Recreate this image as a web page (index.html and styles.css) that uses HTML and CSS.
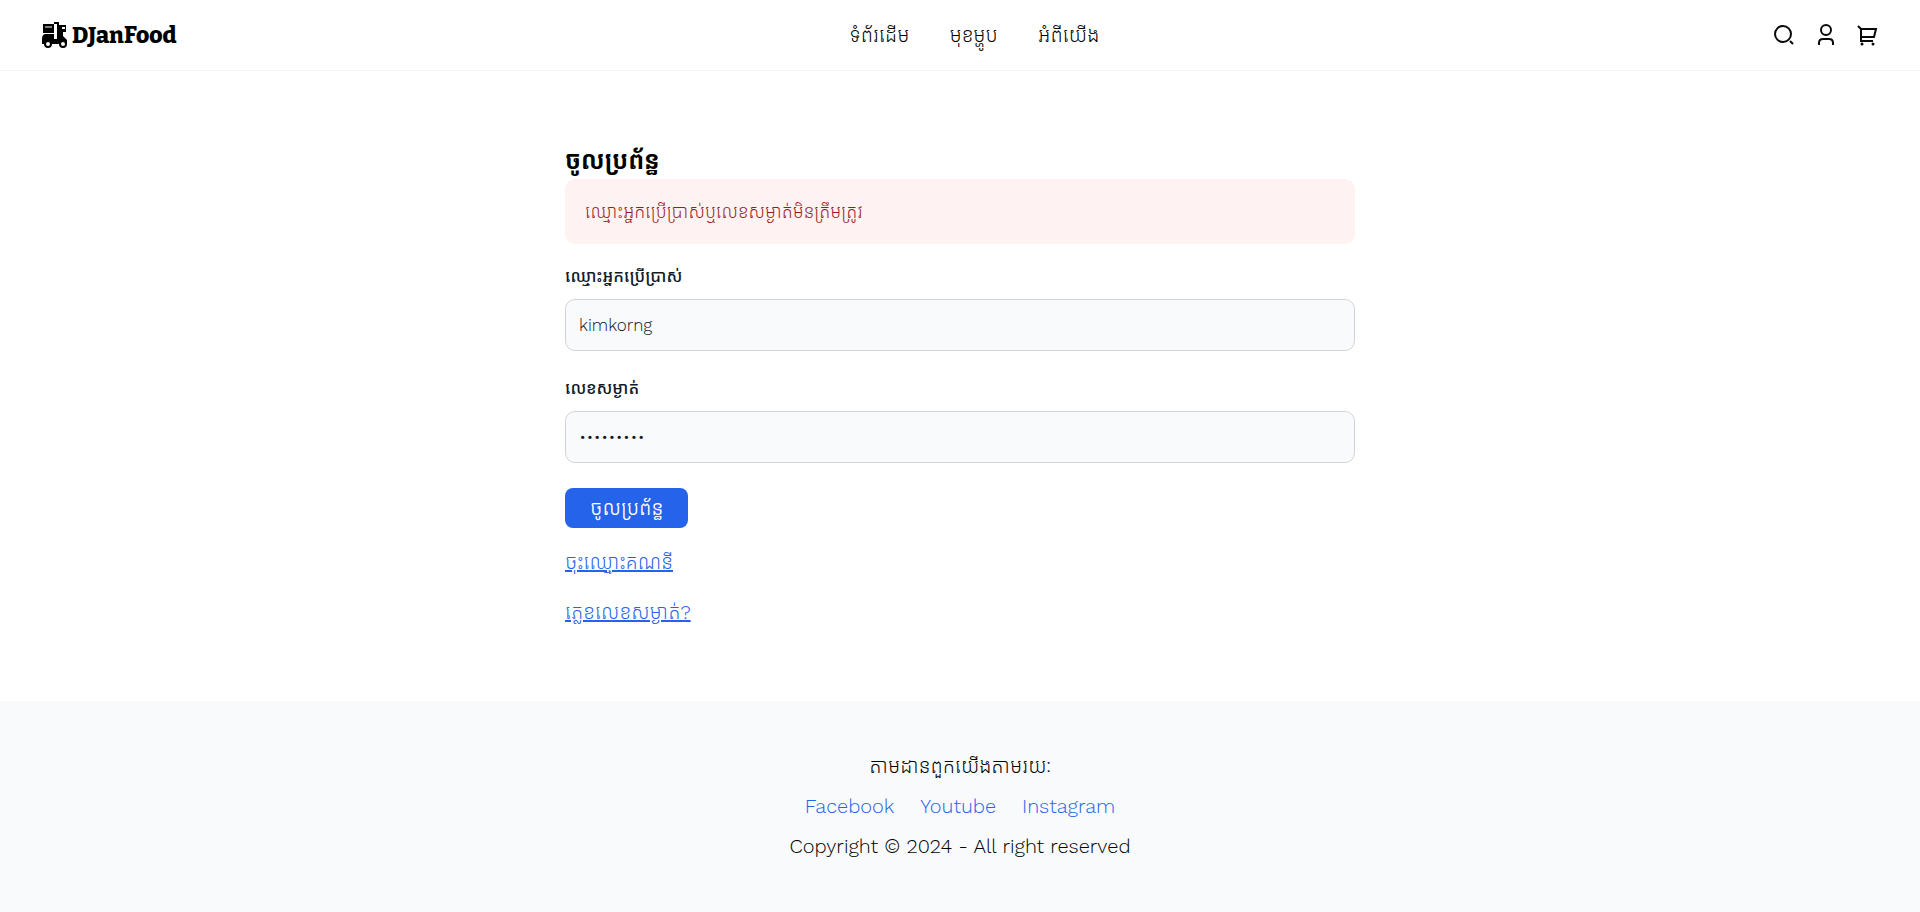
FILE: index.html
```html
<!DOCTYPE html>
<html lang="km">
<head>
    <meta charset="UTF-8">
    <meta name="viewport" content="width=device-width, initial-scale=1.0">
    <title>DJanFood</title>
    <link rel="stylesheet" href="styles.css">
</head>
<body>

<header class="navbar">
    <a href="#" class="logo">
        <svg width="30" height="30" viewBox="0 0 30 30" fill="currentColor">
            <path d="M3 4h11v9H3z"/>
            <path d="M2 22v-3q0-5 4-5h8v5h3V4h-3V2h5v3h7v7h-3v4l4 4v4h-4H2z"/>
            <path d="M5 7h7" stroke="#fff" stroke-width="1"/>
            <path d="M22 8h3" stroke="#fff" stroke-width="2"/>
            <circle cx="8" cy="24" r="3" fill="#fff" stroke="currentColor" stroke-width="2"/>
            <circle cx="23" cy="24" r="3" fill="#fff" stroke="currentColor" stroke-width="2"/>
        </svg>
        <span>DJanFood</span>
    </a>
    <nav class="menu">
        <a href="#">ទំព័រដើម</a>
        <a href="#">មុខម្ហូប</a>
        <a href="#">អំពីយើង</a>
    </nav>
    <div class="icons">
        <button type="button" aria-label="Search">
            <svg width="24" height="24" viewBox="0 0 24 24">
                <circle cx="11" cy="11" r="8"/>
                <path d="M18 18l3 3"/>
            </svg>
        </button>
        <button type="button" aria-label="Account">
            <svg width="24" height="24" viewBox="0 0 24 24">
                <circle cx="12" cy="7" r="5"/>
                <path d="M5 22v-2c0-3 1-4 4-4h6c3 0 4 1 4 4v2"/>
            </svg>
        </button>
        <button type="button" aria-label="Cart">
            <svg width="24" height="24" viewBox="0 0 24 24">
                <path d="M2 3l3 3v12h12M5 6h15l-2 8H5"/>
                <circle class="dot" cx="6" cy="21" r="1.5"/>
                <circle class="dot" cx="17" cy="21" r="1.5"/>
            </svg>
        </button>
    </div>
</header>

<main class="login">
    <h1>ចូលប្រព័ន្ធ</h1>
    <div class="alert" role="alert">ឈ្មោះអ្នកប្រើប្រាស់ឬលេខសម្ងាត់មិនត្រឹមត្រូវ</div>
    <form>
        <label for="username">ឈ្មោះអ្នកប្រើប្រាស់</label>
        <input type="text" id="username" value="kimkorng">
        <label for="password">លេខសម្ងាត់</label>
        <input type="password" id="password" value="123456789">
        <button type="submit" class="submit">ចូលប្រព័ន្ធ</button>
    </form>
    <a href="#" class="link">ចុះឈ្មោះគណនី</a>
    <a href="#" class="link">ភ្លេខលេខសម្ងាត់?</a>
</main>

<footer class="footer">
    <p>តាមដានពួកយើងតាមរយៈ</p>
    <div class="social">
        <a href="#">Facebook</a>
        <a href="#">Youtube</a>
        <a href="#">Instagram</a>
    </div>
    <p>Copyright © 2024 - All right reserved</p>
</footer>

</body>
</html>
```
FILE: styles.css
```css
* {
    margin: 0;
    padding: 0;
    box-sizing: border-box;
}

body {
    display: flex;
    flex-direction: column;
    min-height: 100vh;
    font-family: 'Work Sans', 'Kantumruy Pro', 'Open Sans', 'Noto Sans Khmer', sans-serif;
    font-size: 20px;
    font-weight: 300;
    line-height: 28px;
    color: #000;
    background-color: #fff;
}

a {
    color: inherit;
    text-decoration: none;
}

.navbar {
    display: flex;
    justify-content: space-between;
    align-items: center;
    height: 71px;
    padding: 0 40px;
    border-bottom: 1px solid #f3f4f6;
}

.logo {
    display: flex;
    align-items: center;
    gap: 2px;
    font-family: 'Bitter', 'DejaVu Serif Condensed', 'DejaVu Serif', serif;
    font-size: 23px;
    font-weight: 800;
}

.menu {
    display: flex;
    gap: 40px;
}

.icons {
    display: flex;
    justify-content: flex-end;
    gap: 18px;
}

.icons button {
    display: flex;
    border: none;
    background: none;
    cursor: pointer;
}

.icons svg {
    fill: none;
    stroke: #09090b;
    stroke-width: 2;
}

.icons .dot {
    fill: #09090b;
    stroke: none;
}

.login {
    width: 100%;
    max-width: 830px;
    margin: 0 auto;
    padding: 75px 20px;
}

h1 {
    margin-bottom: 3px;
    font-size: 25px;
    font-weight: 600;
    line-height: 30px;
}

.alert {
    margin-bottom: 20px;
    padding: 20px;
    border-radius: 10px;
    background-color: #fef2f2;
    color: #991b1b;
    font-size: 18px;
    line-height: 25px;
}

label {
    display: block;
    margin-bottom: 10px;
    font-size: 17px;
    font-weight: 500;
    line-height: 25px;
    color: #111827;
}

input {
    display: block;
    width: 100%;
    height: 52px;
    margin-bottom: 25px;
    padding: 0 13px;
    border: 1px solid #d1d5db;
    border-radius: 10px;
    background-color: #f9fafb;
    color: #111827;
    font: inherit;
    font-size: 17px;
}

.submit {
    display: block;
    height: 40px;
    padding: 0 25px;
    border: none;
    border-radius: 8px;
    background-color: #2563eb;
    color: #fff;
    font: inherit;
    font-weight: 400;
    cursor: pointer;
}

.link {
    display: block;
    width: fit-content;
    margin-top: 22px;
    color: #2563eb;
    text-decoration: underline;
}

.link:first-of-type {
    margin-top: 20px;
}

.footer {
    flex: 1;
    display: flex;
    flex-direction: column;
    align-items: center;
    gap: 12px;
    padding: 51px 20px;
    background-color: #f9fafb;
}

.social {
    display: flex;
    gap: 26px;
    color: #2563eb;
}
```
